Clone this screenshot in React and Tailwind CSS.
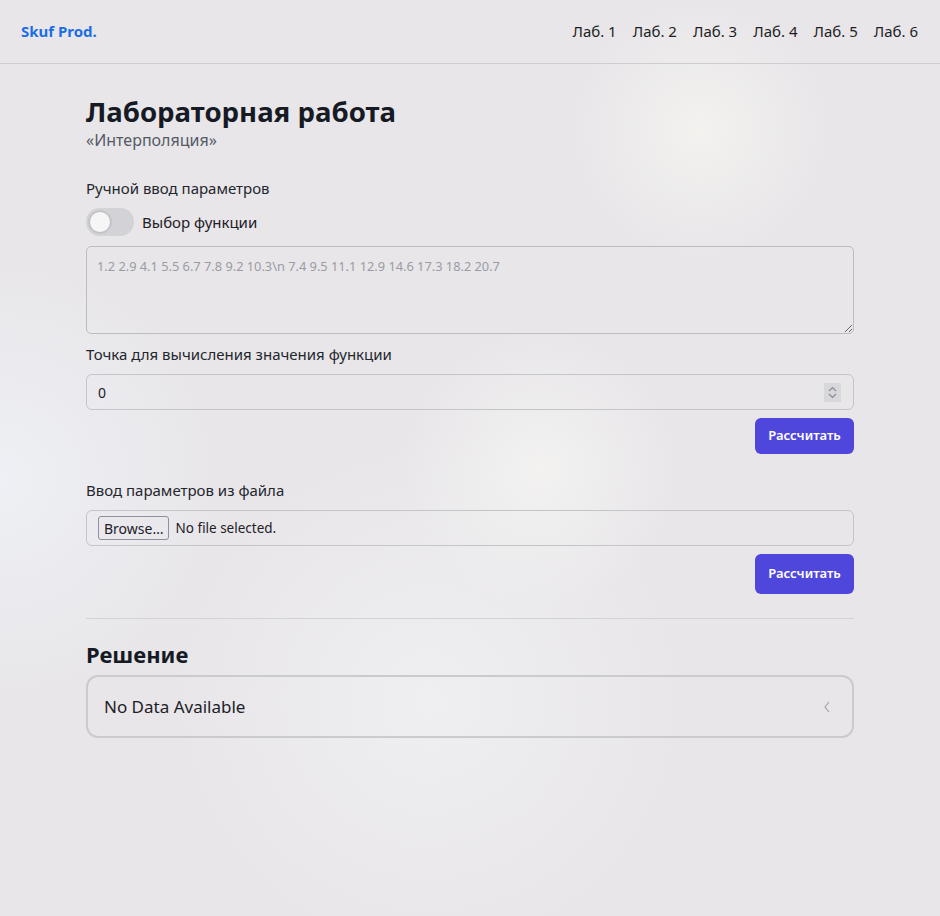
import React from "react";

export default function App() {
  const labs = ["Лаб. 1", "Лаб. 2", "Лаб. 3", "Лаб. 4", "Лаб. 5", "Лаб. 6"];
  return (
    <div className="min-h-[916px] w-full bg-[#e8e6e9] bg-[radial-gradient(circle_at_700px_130px,#f3f2ef_0px,rgba(243,242,239,0.6)_50px,rgba(232,230,233,0)_130px),radial-gradient(circle_at_540px_470px,#f3f2f1_0px,rgba(243,242,241,0)_140px),radial-gradient(circle_at_0px_480px,#eef0f5_0px,rgba(238,240,245,0)_220px),radial-gradient(circle_at_430px_700px,#efeef0_0px,rgba(239,238,240,0)_260px)] font-['Noto_Sans',sans-serif] text-[#1f2430]">
      <header className="flex h-[64px] items-center justify-between border-b border-[#cfcdd1] pl-[21px] pr-[22px]">
        <div className="text-[15px] font-bold text-[#1c6fe3]">Skuf Prod.</div>
        <nav className="flex items-center gap-[16px] text-[15px] text-[#1d1f24]">
          {labs.map((l) => (
            <span key={l}>{l}</span>
          ))}
        </nav>
      </header>

      <main className="mx-auto w-[768px] pt-[29px]">
        <h1 className="text-[27.6px] font-bold leading-[36px] text-[#161a24]">Лабораторная работа</h1>
        <div className="mt-[1px] text-[16px] leading-[20px] text-[#555a66]">«Интерполяция»</div>

        <div className="mt-[28px] text-[15px] leading-[20px] text-[#23262d]">Ручной ввод параметров</div>
        <div className="mt-[10px] flex items-center gap-[8px]">
          <div className="flex h-[28px] w-[48px] items-center rounded-full bg-[#d3d2d6] px-[3px]">
            <div className="h-[22px] w-[22px] rounded-full border border-[#bdbcc1] bg-[#f6f6f7] shadow-[0_0_0_1px_rgba(0,0,0,0.05)]" />
          </div>
          <span className="text-[15px] text-[#1d2027]">Выбор функции</span>
        </div>

        <textarea
          className="mt-[10px] block h-[88px] w-full rounded-[5px] border border-[#bdbcc2] bg-transparent px-[10px] py-[10px] text-[12.8px] leading-[18px] text-[#1d2027] placeholder:text-[#9a9ca4] outline-none"
          placeholder="1.2 2.9 4.1 5.5 6.7 7.8 9.2 10.3\n 7.4 9.5 11.1 12.9 14.6 17.3 18.2 20.7"
        />

        <div className="mt-[10px] text-[15px] leading-[20px] text-[#23262d]">Точка для вычисления значения функции</div>
        <div className="relative mt-[10px] flex h-[36px] w-full items-center rounded-[6px] border border-[#c5c4c9] px-[11px] text-[14px] text-[#1d2027]">
          <span>0</span>
          <div className="absolute right-[12px] top-[8px] flex h-[19px] w-[17px] flex-col items-center justify-center bg-[#d8d7db]">
            <svg width="9" height="6" viewBox="0 0 9 6" fill="none" stroke="#8a8b92" strokeWidth="1.2"><path d="M1 5 L4.5 1.5 L8 5" /></svg>
            <svg width="9" height="6" viewBox="0 0 9 6" fill="none" stroke="#8a8b92" strokeWidth="1.2" className="mt-[1px]"><path d="M1 1 L4.5 4.5 L8 1" /></svg>
          </div>
        </div>
        <div className="mt-[8px] flex justify-end">
          <button className="h-[36px] w-[99px] rounded-[6px] bg-[#4f46dc] text-[13px] font-semibold text-white">Рассчитать</button>
        </div>

        <div className="mt-[26px] text-[15px] leading-[20px] text-[#23262d]">Ввод параметров из файла</div>
        <div className="mt-[10px] flex h-[36px] w-full items-center gap-[6px] rounded-[6px] border border-[#c5c4c9] px-[11px] text-[14px] text-[#1d2027]">
          <span className="flex h-[24px] items-center rounded-[3px] border border-[#8f8f9d] bg-[#e9e9ed] px-[5px] text-[14px]">Browse…</span>
          <span className="text-[13.5px]">No file selected.</span>
        </div>
        <div className="mt-[8px] flex justify-end">
          <button className="h-[40px] w-[99px] rounded-[6px] bg-[#4f46dc] text-[13px] font-semibold text-white">Рассчитать</button>
        </div>

        <div className="mt-[24px] border-t border-[#d3d2d6]" />

        <h2 className="mt-[20px] text-[22px] font-bold leading-[30px] text-[#161a24]">Решение</h2>
        <div className="mt-[6px] flex h-[63px] items-center justify-between rounded-[12px] border-2 border-[#cbcace] px-[16px]">
          <span className="text-[17px] text-[#1d2027]">No Data Available</span>
          <svg width="10" height="14" viewBox="0 0 10 14" fill="none" stroke="#a3a4ab" strokeWidth="1.2" className="mr-[4px]"><path d="M7 2 L3 7 L7 12" /></svg>
        </div>
      </main>
    </div>
  );
}
